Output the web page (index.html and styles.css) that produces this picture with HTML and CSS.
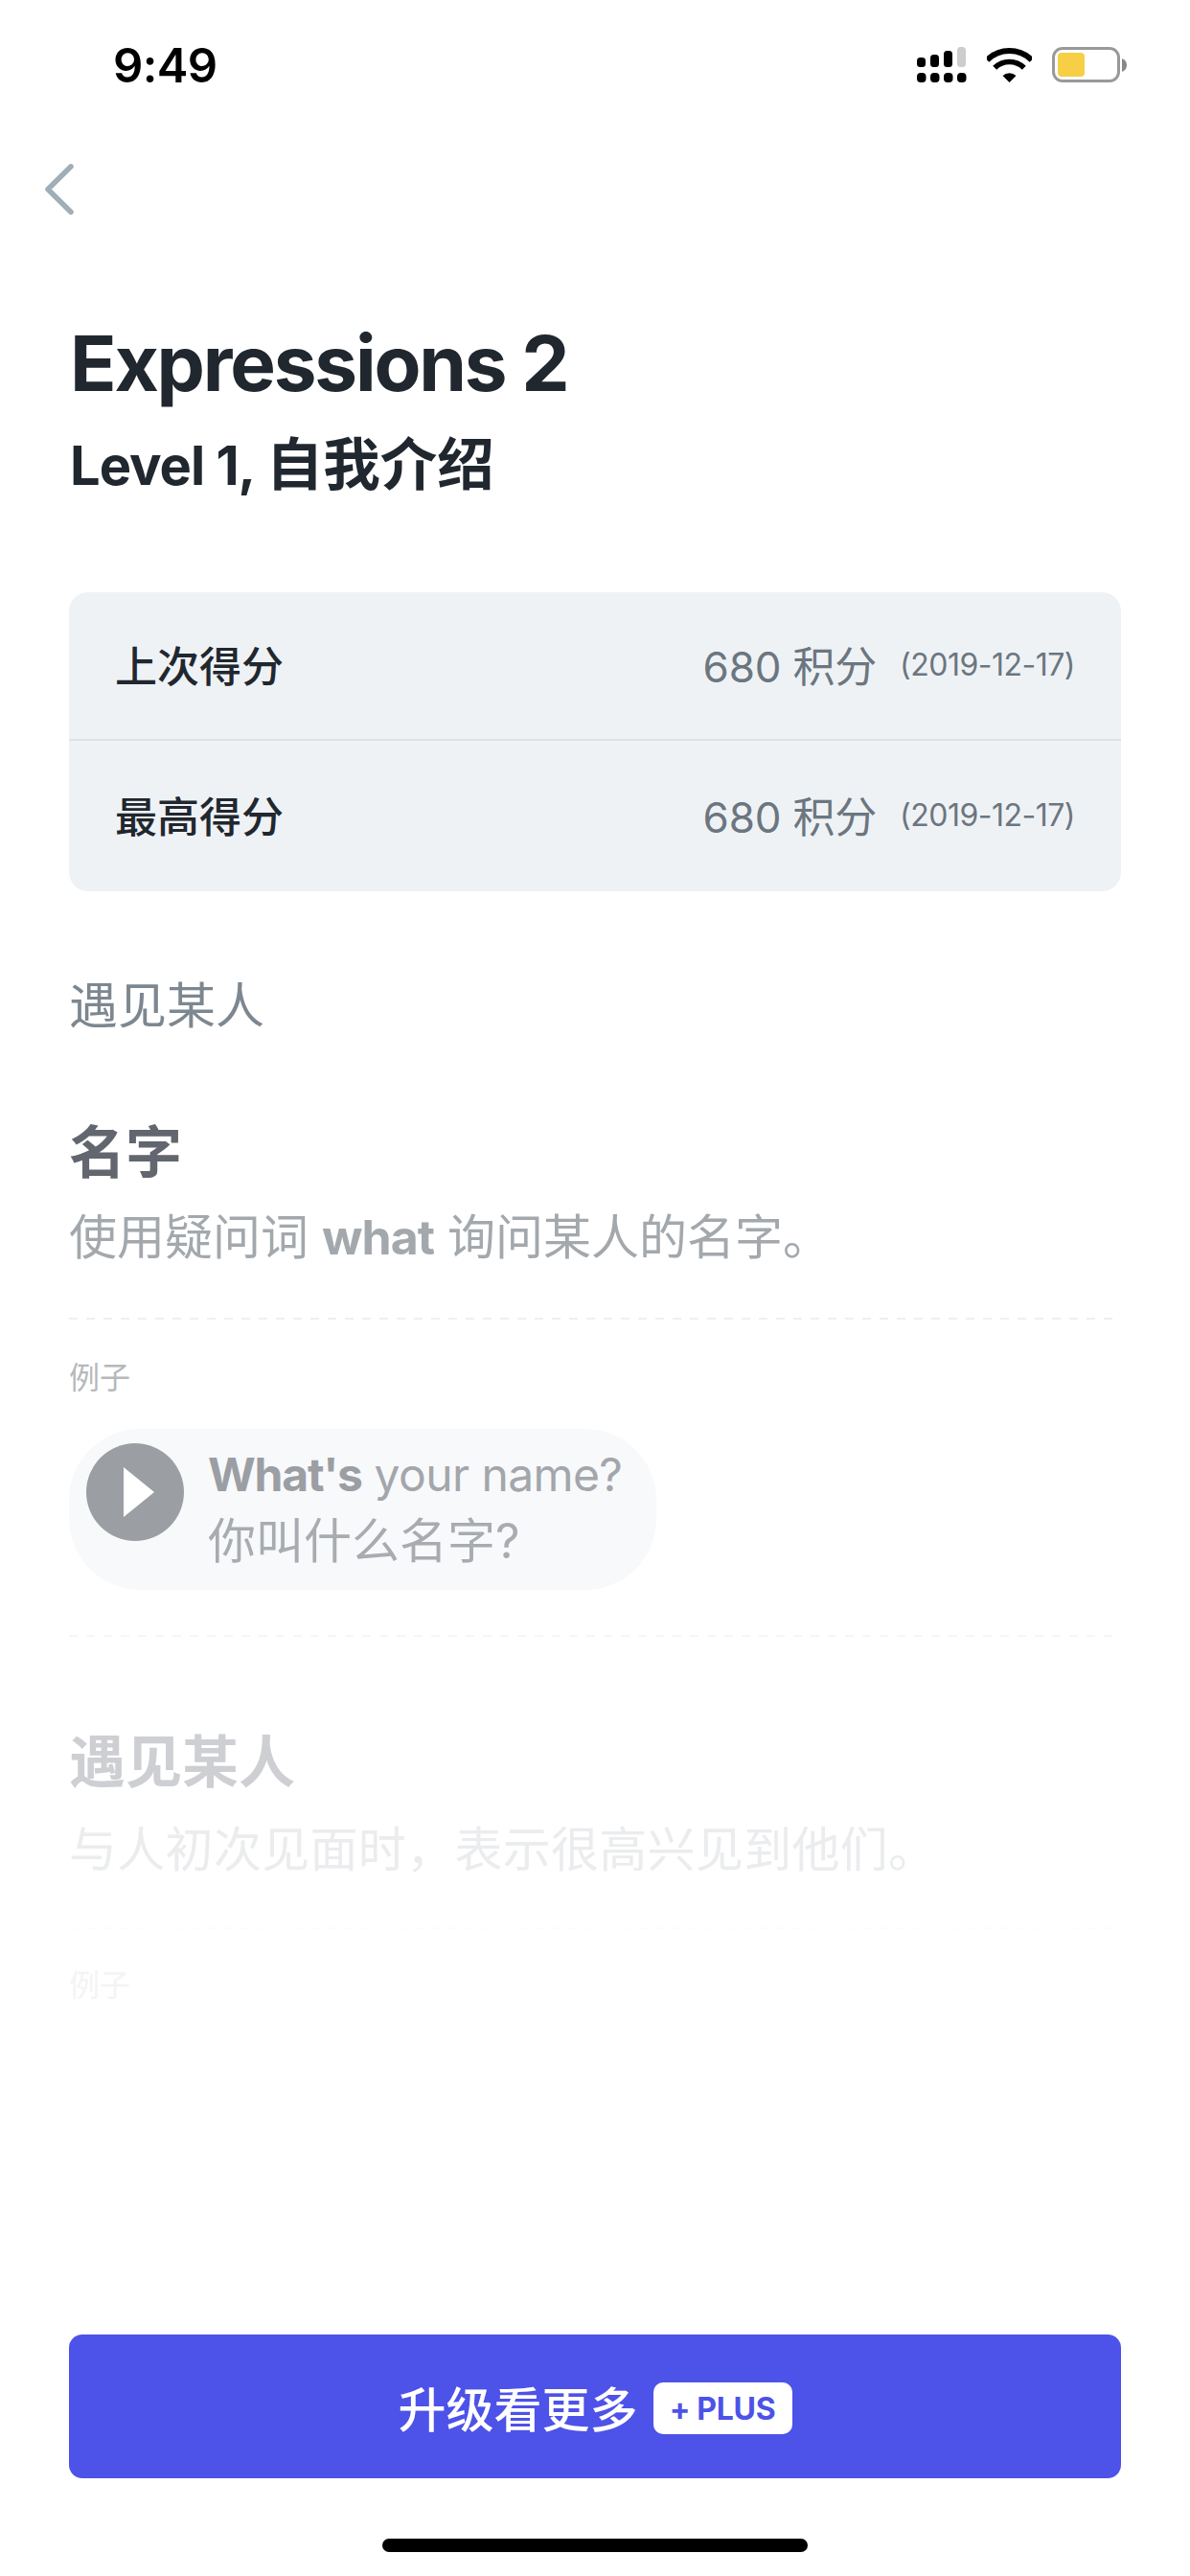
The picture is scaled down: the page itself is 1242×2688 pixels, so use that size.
FILE: index.html
```html
<!DOCTYPE html>
<html lang="zh">
<head>
<meta charset="utf-8">
<title>Expressions 2</title>
<link rel="stylesheet" href="styles.css">
</head>
<body>
<div class="page">
  <header class="status">
    <span class="time">9:49</span>
    <div class="status-icons">
      <svg class="sig" width="52" height="38" viewBox="0 0 52 38">
        <rect x="0" y="11" width="9" height="10" rx="3.5"/>
        <rect x="14" y="8" width="9" height="13" rx="3.5"/>
        <rect x="28" y="4" width="9" height="17" rx="3.5"/>
        <rect x="42" y="0" width="9" height="21" rx="3.5" fill="#cdcdcd"/>
        <rect x="0" y="27" width="9.5" height="10" rx="4"/>
        <rect x="14" y="27" width="9.5" height="10" rx="4"/>
        <rect x="28" y="27" width="9.5" height="10" rx="4"/>
        <rect x="42" y="27" width="9.5" height="10" rx="4"/>
      </svg>
      <svg width="47" height="36" viewBox="0 0 47 36">
        <path d="M.2 12.7A33 33 0 0 1 46.8 12.7" fill="none" stroke="#000" stroke-width="6"/>
        <path d="M8.2 20.7A21.7 21.7 0 0 1 38.8 20.7" fill="none" stroke="#000" stroke-width="5.5"/>
        <path d="M23.5 36L16.5 29A10 10 0 0 1 30.5 29Z"/>
      </svg>
      <svg width="79" height="38" viewBox="0 0 79 38">
        <rect x="1.5" y="1.5" width="68" height="34" rx="9.5" fill="#fff" stroke="#999" stroke-width="3"/>
        <rect x="6" y="6" width="28" height="25" rx="4" fill="#f7cf47"/>
        <path d="M73 12Q78 14 78 19T73 26Z" fill="#888"/>
      </svg>
    </div>
  </header>

  <nav class="nav">
    <svg width="30" height="53" viewBox="0 0 30 53">
      <path d="M27 2.800L3 26.500L27 50.200" fill="none" stroke="#a0aeb8" stroke-width="5.500" stroke-linecap="round" stroke-linejoin="round"/>
    </svg>
  </nav>

  <main class="main">
    <h1 class="title">Expressions 2</h1>
    <h2 class="subtitle">Level 1, <span class="subtitle-zh">自我介绍</span></h2>

    <section class="scores">
      <div class="score score-first">
        <span class="score-name">上次得分</span>
        <span class="score-value">680 积分</span>
        <span class="score-date">(2019-12-17)</span>
      </div>
      <div class="score">
        <span class="score-name">最高得分</span>
        <span class="score-value">680 积分</span>
        <span class="score-date">(2019-12-17)</span>
      </div>
    </section>

    <p class="section-label">遇见某人</p>

    <h3 class="topic">名字</h3>
    <p class="desc">使用疑问词 <b>what</b> 询问某人的名字。</p>
    <div class="dash"></div>
    <p class="example-label">例子</p>
    <div class="pill">
      <span class="play">
        <svg width="34" height="54" viewBox="0 0 34 54"><path d="M1 1L33 27L1 53Z" fill="#fff"/></svg>
      </span>
      <div class="pill-text">
        <p class="pill-en"><b>What's</b> your name?</p>
        <p class="pill-zh">你叫什么名字?</p>
      </div>
    </div>
    <div class="dash dash-second"></div>

    <h3 class="topic topic-faded">遇见某人</h3>
    <p class="desc desc-faded">与人初次见面时，表示很高兴见到他们。</p>
    <div class="dash dash-faded"></div>
    <p class="example-label example-faded">例子</p>
  </main>

  <footer class="footer">
    <button class="cta">升级看更多<span class="badge">+ PLUS</span></button>
    <div class="home"></div>
  </footer>
</div>
</body>
</html>
```

FILE: styles.css
```css
* { box-sizing: border-box; }
html, body { margin: 0; padding: 0; background: #fff; }
body { font-family: "Inter", "Noto Sans CJK SC", sans-serif; }
h1, h2, h3, p { margin: 0; font-weight: inherit; }

.page { width: 1242px; height: 2688px; display: flex; flex-direction: column; overflow: hidden; }

.status { height: 136px; flex: none; display: flex; align-items: center; justify-content: space-between; padding: 0 65px 0 118px; }
.time { font-family: "Inter", sans-serif; font-size: 49px; font-weight: 600; color: #000; letter-spacing: -.6px; }
.status-icons { display: flex; align-items: center; gap: 21px; }
.status-icons svg { display: block; }

.nav { height: 122px; flex: none; display: flex; align-items: center; padding-left: 47px; }

.main { padding: 0 72px; }
.title { margin-top: 71px; font-size: 80px; line-height: 100px; font-weight: 700; color: #21272f; letter-spacing: -2.2px; padding-left: 1px; }
.subtitle { margin-top: 15px; height: 80px; font-size: 56px; line-height: 80px; font-weight: 700; color: #21272f; letter-spacing: -1px; padding-left: 1px; }
.subtitle-zh { font-size: 59.5px; letter-spacing: 0; margin-left: 1px; }

.scores { margin-top: 94px; height: 312px; background: #eff2f5; border-radius: 20px; display: flex; flex-direction: column; }
.score { flex: 1; display: flex; align-items: center; padding: 0 48px 3px; }
.score-first { flex: none; height: 155px; border-bottom: 2px solid #dde2e7; }
.score-name { font-size: 44px; font-weight: 500; color: #21272f; margin-right: auto; }
.score-value { font-size: 44px; color: #6b7680; letter-spacing: -.2px; }
.score-date { font-size: 32px; color: #6b7680; margin-left: 24px; letter-spacing: -.5px; }

.section-label { margin-top: 85px; font-size: 51px; line-height: 70px; color: #7d8790; }

.topic { margin-top: 78px; font-size: 59px; line-height: 80px; font-weight: 700; color: #62666e; }
.desc { margin-top: 13px; font-size: 50px; line-height: 70px; color: #a3a8ad; white-space: nowrap; }
.desc b { font-weight: 700; letter-spacing: -1px; }

.dash { width: 1092px; height: 2px; margin-top: 49px; background: repeating-linear-gradient(90deg, #eeeff1 0 9px, transparent 9px 18px); }
.example-label { margin-top: 41px; font-size: 32px; line-height: 40px; color: #b5b9bd; }

.pill { margin-top: 33px; width: 613px; height: 168px; border-radius: 74px; background: #f8f9fb; display: flex; align-items: center; padding: 0 0 0 18px; gap: 25px; }
.play { width: 102px; height: 102px; border-radius: 50%; background: #9b9ea3; display: flex; align-items: center; justify-content: center; flex: none; padding-left: 8px; align-self: flex-start; margin-top: 15px; }
.play svg { display: block; }
.pill-text { display: flex; flex-direction: column; margin-top: -3px; }
.pill-en { font-size: 48px; line-height: 68px; color: #a3a6ab; white-space: nowrap; letter-spacing: -.6px; }
.pill-en b { font-weight: 700; color: #9b9ea3; letter-spacing: -1.2px; }
.pill-zh { font-size: 50px; line-height: 70px; color: #a8abb0; white-space: nowrap; }

.dash-second { margin-top: 47px; background: repeating-linear-gradient(90deg, #f5f6f7 0 9px, transparent 9px 18px); }
.topic-faded { margin-top: 91px; color: #cdcfd2; }
.desc-faded { margin-top: 16px; color: #ebecee; letter-spacing: .3px; }
.dash-faded { margin-top: 46px; background: repeating-linear-gradient(90deg, #fcfcfc 0 9px, transparent 9px 18px); }
.example-faded { margin-top: 39px; color: #f4f4f5; }

.footer { margin-top: auto; padding: 0 72px 25px; display: flex; flex-direction: column; align-items: center; }
.cta { width: 100%; height: 150px; border: 0; border-radius: 14px; background: #4d52e8; color: #fff; font-family: "Noto Sans CJK SC", sans-serif; font-size: 50px; font-weight: 500; display: flex; align-items: center; justify-content: center; gap: 16px; padding: 0; }
.badge { width: 145px; height: 54px; margin-top: 4px; border-radius: 10px; background: #fff; color: #4d52e8; font-family: "Inter", sans-serif; font-size: 32px; font-weight: 700; display: flex; align-items: center; justify-content: center; letter-spacing: -.3px; }
.home { width: 444px; height: 14px; margin-top: 63px; border-radius: 7px; background: #000; }
```
